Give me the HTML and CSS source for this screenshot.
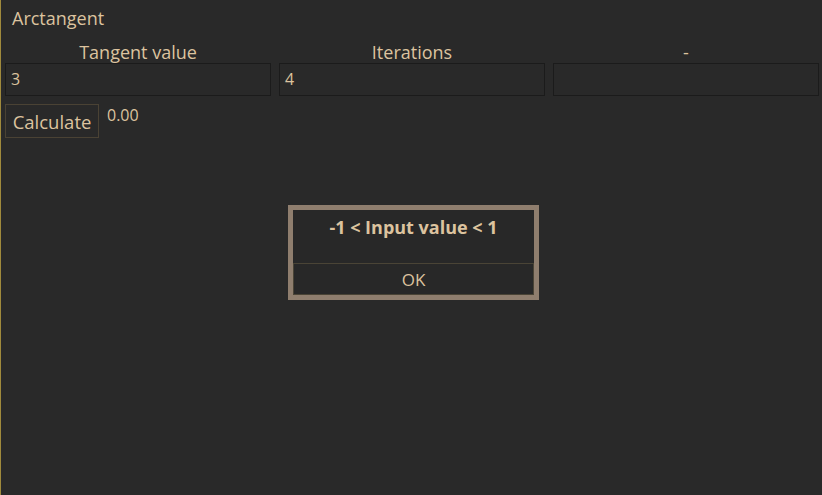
FILE: index.html
```html
<!DOCTYPE html>
<html>
<head>
<meta charset="utf-8">
<link rel="stylesheet" href="styles.css">
</head>
<body>
<div class="app">
  <div class="title">Arctangent</div>
  <div class="fields">
    <div class="field">
      <div class="label">Tangent value</div>
      <div class="input">3</div>
    </div>
    <div class="field">
      <div class="label">Iterations</div>
      <div class="input">4</div>
    </div>
    <div class="field">
      <div class="label">-</div>
      <div class="input"></div>
    </div>
  </div>
  <div class="actions">
    <button class="btn">Calculate</button>
    <div class="result">0.00</div>
  </div>
</div>
<div class="dialog">
  <div class="dialog-msg">-1 &lt; Input value &lt; 1</div>
  <button class="dialog-ok">OK</button>
</div>
</body>
</html>
```
FILE: styles.css
```css
html, body {
  margin: 0;
  height: 100%;
}
body {
  background: #292929;
  border-left: 1px solid #a08a3c;
  box-sizing: border-box;
  font-family: "Open Sans", sans-serif;
  color: #dcc39f;
  position: relative;
}
.app {
  padding: 5px 3px 0 4px;
}
.title {
  font-size: 18px;
  line-height: 26px;
  padding-left: 7px;
}
.fields {
  display: grid;
  grid-template-columns: 1fr 1fr 1fr;
  gap: 8px;
  margin-top: 10px;
}
.label {
  text-align: center;
  font-size: 18px;
  line-height: 22px;
  height: 22px;
}
.input {
  height: 33px;
  box-sizing: border-box;
  border: 1px solid #1b1b1b;
  font-size: 16px;
  line-height: 31px;
  padding-left: 5px;
}
.actions {
  display: flex;
  align-items: flex-start;
  gap: 8px;
  margin-top: 8px;
}
.btn {
  background: transparent;
  border: 1px solid #4a4234;
  color: #dcc39f;
  font-family: inherit;
  font-size: 18.5px;
  height: 34px;
  width: 94px;
  padding: 0;
  margin: 0;
}
.result {
  font-size: 16px;
  line-height: 22px;
}
.dialog {
  position: absolute;
  left: 287px;
  top: 205px;
  width: 241px;
  border: 5px solid #8f7e6e;
  background: #282828;
  display: flex;
  flex-direction: column;
}
.dialog-msg {
  height: 53px;
  text-align: center;
  font-weight: bold;
  font-size: 18px;
  line-height: 34px;
}
.dialog-ok {
  height: 32px;
  margin: 0;
  background: #282828;
  border: 1px solid #4a4436;
  color: #dcc39f;
  font-family: inherit;
  font-size: 17px;
}
```
